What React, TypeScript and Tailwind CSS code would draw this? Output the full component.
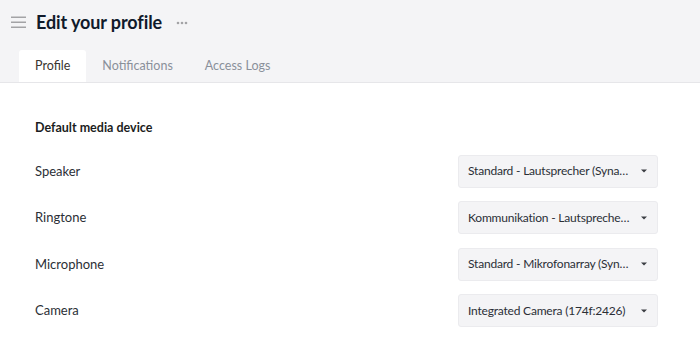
import React from 'react';

const devices = [
  { id: 'speaker', label: 'Speaker', value: 'Standard - Lautsprecher (Synaptics Audio)' },
  { id: 'ringtone', label: 'Ringtone', value: 'Kommunikation - Lautsprecher (Synaptics Audio)' },
  { id: 'microphone', label: 'Microphone', value: 'Standard - Mikrofonarray (Synaptics Audio)' },
  { id: 'camera', label: 'Camera', value: 'Integrated Camera (174f:2426)' },
];

const tabs = ['Profile', 'Notifications', 'Access Logs'];

function DeviceSelect({ value }: { value: string }) {
  return (
    <button className="w-[200px] h-[33px] flex items-center justify-between pl-[9px] pr-[10px] bg-[#f4f4f6] border border-[#ebebee] rounded-[3px] text-left">
      <span className="truncate text-[12px] tracking-[-0.2px] text-[#2b2f36] pr-[8px]">{value}</span>
      <svg width="6" height="4" viewBox="0 0 6 4" className="shrink-0">
        <path d="M0 0.5h6L3 3.5z" fill="#3a3d42" />
      </svg>
    </button>
  );
}

export default function App() {
  return (
    <div className="w-[700px] h-[340px] bg-white overflow-hidden" style={{ fontFamily: 'Lato, "Noto Sans", sans-serif' }}>
      <header className="bg-[#f4f4f6] border-b border-[#e6e6e9]">
        <div className="flex items-center h-[44px] pl-[11px]">
          <svg width="15" height="13" viewBox="0 0 15 13">
            <rect x="0" y="0.5" width="15" height="1.5" fill="#a3a3a6" />
            <rect x="0" y="5.5" width="15" height="1.5" fill="#a3a3a6" />
            <rect x="0" y="10.5" width="15" height="1.5" fill="#a3a3a6" />
          </svg>
          <h1 className="ml-[10px] text-[18px] font-bold text-[#101a2b] tracking-[-0.1px]">Edit your profile</h1>
          <svg width="12" height="4" viewBox="0 0 12 4" className="ml-[14px] mt-[1px]">
            <circle cx="2" cy="2" r="1.3" fill="#a3a3a6" />
            <circle cx="6" cy="2" r="1.3" fill="#a3a3a6" />
            <circle cx="10" cy="2" r="1.3" fill="#a3a3a6" />
          </svg>
        </div>
        <nav className="flex pl-[19px] mt-[6px]">
          {tabs.map((t, i) => (
            <div
              key={t}
              className={`h-[32px] flex items-center px-[16px] text-[12.5px] rounded-t-[3px] ${
                i === 0 ? 'bg-white text-[#3a3530] -mb-px' : 'text-[#8a909a]'
              }`}
            >
              {t}
            </div>
          ))}
        </nav>
      </header>

      <main className="pl-[35px] pr-[42px] pt-[36px]">
        <h2 className="text-[12.5px] font-bold text-[#1b1d21]">Default media device</h2>
        <div className="mt-[17px] flex flex-col gap-[13.5px]">
          {devices.map(d => (
            <div key={d.id} className="flex items-center justify-between">
              <span className="text-[13px] text-[#2b2f36]">{d.label}</span>
              <DeviceSelect value={d.value} />
            </div>
          ))}
        </div>
      </main>
    </div>
  );
}
